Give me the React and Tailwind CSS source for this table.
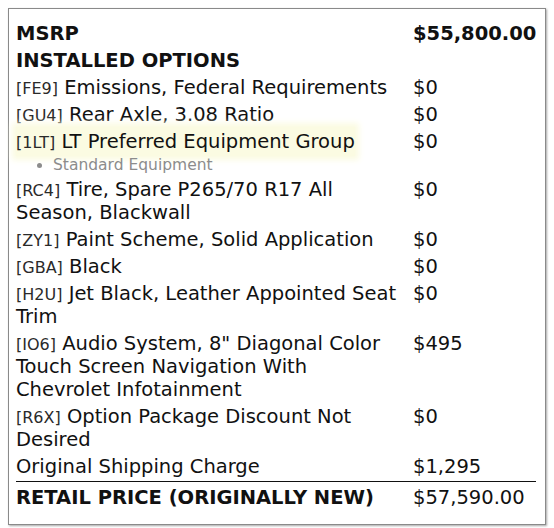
import React from "react";

const rows = [
  { code: "FE9", text: "Emissions, Federal Requirements", price: "$0" },
  { code: "GU4", text: "Rear Axle, 3.08 Ratio", price: "$0" },
  { code: "1LT", text: "LT Preferred Equipment Group", price: "$0", highlight: true, note: "Standard Equipment" },
  { code: "RC4", text: "Tire, Spare P265/70 R17 All Season, Blackwall", price: "$0" },
  { code: "ZY1", text: "Paint Scheme, Solid Application", price: "$0" },
  { code: "GBA", text: "Black", price: "$0" },
  { code: "H2U", text: "Jet Black, Leather Appointed Seat Trim", price: "$0" },
  { code: "IO6", text: 'Audio System, 8" Diagonal Color Touch Screen Navigation With Chevrolet Infotainment', price: "$495" },
  { code: "R6X", text: "Option Package Discount Not Desired", price: "$0" },
];

function OptionRow({ row }) {
  const label = (
    <>
      <span className="text-[16px] leading-none text-[#2a2a2a]">[{row.code}]</span> {row.text}
    </>
  );
  return (
    <>
      <div className="py-[2px] pr-2">
        {row.highlight ? (
          <span className="bg-[#fbfbe2] py-[3px] shadow-[0_0_6px_4px_#fbfbe2]">{label}</span>
        ) : (
          label
        )}
        {row.note && (
          <ul className="list-disc mt-[3px] pl-[37px] text-[15.5px] leading-[18px] text-[#8c8c8c]">
            <li>{row.note}</li>
          </ul>
        )}
      </div>
      <div className="py-[2px]">{row.price}</div>
    </>
  );
}

export default function App() {
  return (
    <div className="bg-white min-h-[528px] pt-2">
      <div
        className="mx-2 w-[538px] border border-[#8a8a8a] shadow-[1px_1px_2px_rgba(0,0,0,0.35)] px-[7px] pt-[11px] pb-[13px] text-[19.5px] leading-[23px] text-[#111]"
        style={{ fontFamily: '"DejaVu Sans", sans-serif' }}
      >
        <div className="grid grid-cols-[397px_1fr] w-[520px]">
          <div className="py-[2px] font-bold">MSRP</div>
          <div className="py-[2px] font-bold">$55,800.00</div>
          <div className="py-[2px] font-bold col-span-2">INSTALLED OPTIONS</div>
          {rows.map((row) => (
            <OptionRow key={row.code} row={row} />
          ))}
          <div className="pt-[2px] pb-[3px]">Original Shipping Charge</div>
          <div className="pt-[2px] pb-[3px]">$1,295</div>
          <div className="pt-[4px] pb-[2px] font-bold border-t border-[#111]">RETAIL PRICE (ORIGINALLY NEW)</div>
          <div className="pt-[4px] pb-[2px] border-t border-[#111]">$57,590.00</div>
        </div>
      </div>
    </div>
  );
}
